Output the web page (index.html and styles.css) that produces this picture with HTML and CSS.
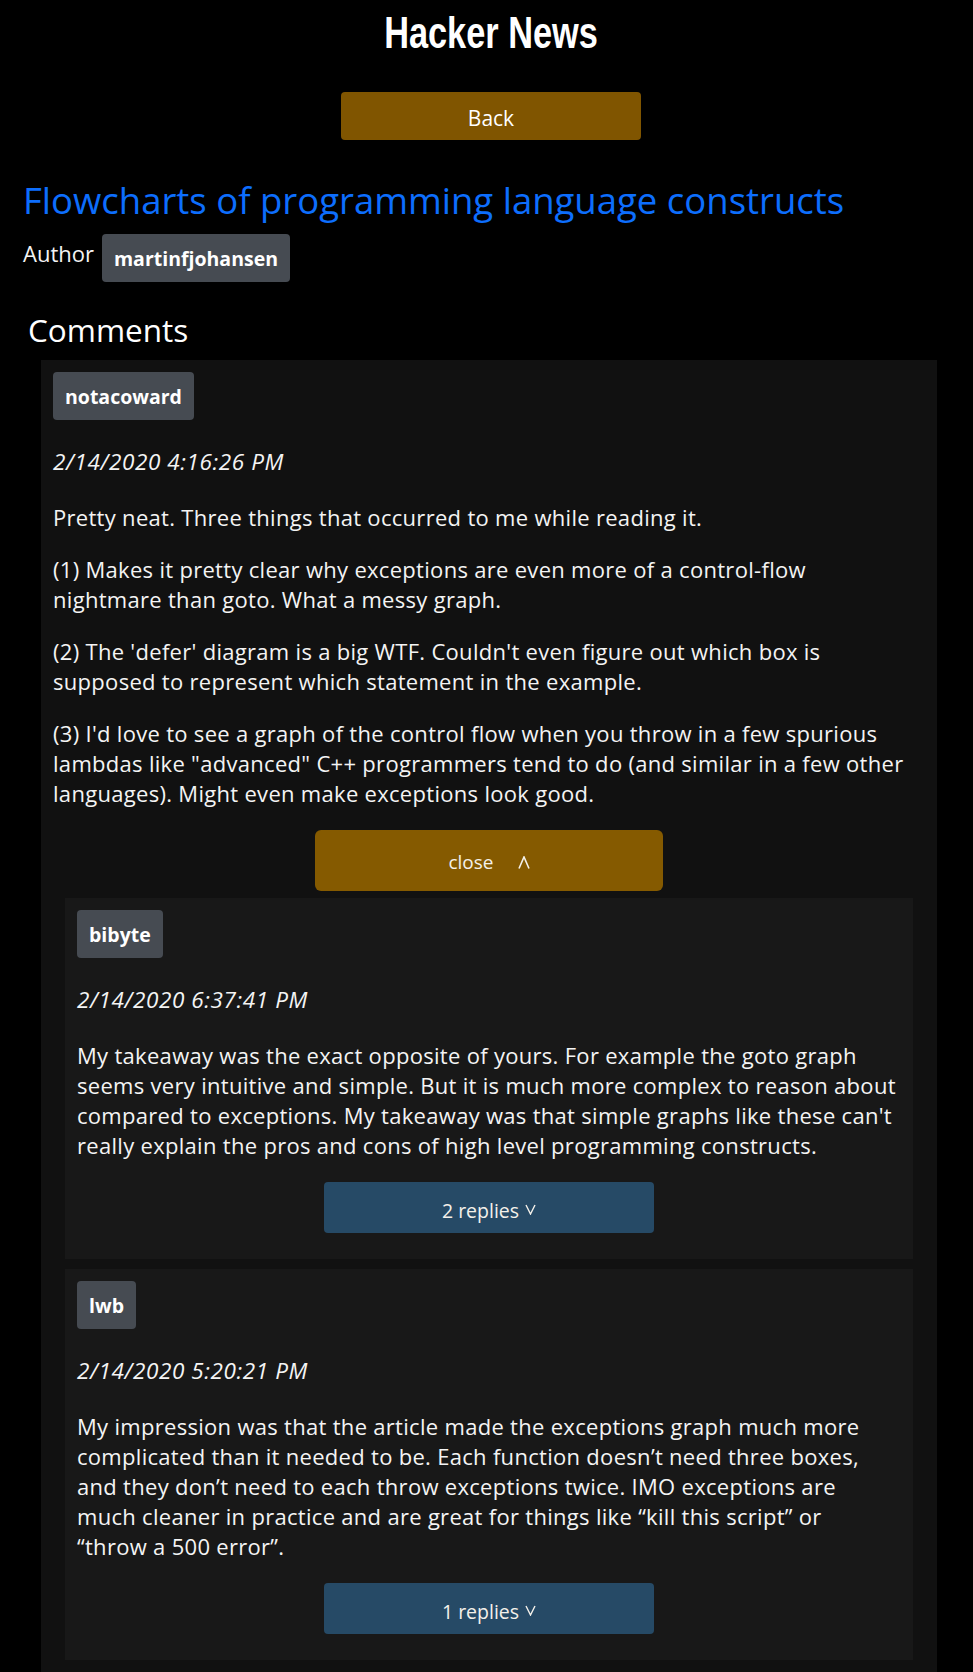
FILE: index.html
```html
<!DOCTYPE html>
<html lang="en">
<head>
<meta charset="utf-8">
<title>Hacker News</title>
<link rel="stylesheet" href="styles.css">
</head>
<body>
<div class="app">
  <header class="masthead">
    <h1 class="logo"><span class="logo-text">Hacker News</span></h1>
  </header>
  <div class="back-row">
    <button class="btn btn-back" type="button">Back</button>
  </div>
  <h2 class="story-title">Flowcharts of programming language constructs</h2>
  <div class="author-row">
    <span class="author-label">Author</span>
    <span class="user-badge">martinfjohansen</span>
  </div>
  <section class="comments">
    <h3 class="comments-heading">Comments</h3>
    <article class="comment comment-root">
      <div class="comment-head"><span class="user-badge">notacoward</span></div>
      <p class="comment-date">2/14/2020 4:16:26 PM</p>
      <div class="comment-body">
        <p>Pretty neat. Three things that occurred to me while reading it.</p>
        <p>(1) Makes it pretty clear why exceptions are even more of a control-flow<br>nightmare than goto. What a messy graph.</p>
        <p>(2) The 'defer' diagram is a big WTF. Couldn't even figure out which box is<br>supposed to represent which statement in the example.</p>
        <p>(3) I'd love to see a graph of the control flow when you throw in a few spurious<br>lambdas like "advanced" C++ programmers tend to do (and similar in a few other<br>languages). Might even make exceptions look good.</p>
      </div>
      <button class="btn toggle toggle-close" type="button"><span>close</span><svg class="caret caret-up" viewBox="0 0 12 13" width="12" height="13"><polyline points="1,12.5 6,1 11,12.5" fill="none" stroke="currentColor" stroke-width="1.6"/></svg></button>
      <div class="replies">
        <article class="comment comment-reply">
          <div class="comment-head"><span class="user-badge">bibyte</span></div>
          <p class="comment-date">2/14/2020 6:37:41 PM</p>
          <div class="comment-body">
            <p>My takeaway was the exact opposite of yours. For example the goto graph<br>seems very intuitive and simple. But it is much more complex to reason about<br>compared to exceptions. My takeaway was that simple graphs like these can't<br>really explain the pros and cons of high level programming constructs.</p>
          </div>
          <button class="btn toggle toggle-replies" type="button"><span>2 replies</span><svg class="caret caret-down" viewBox="0 0 11 11" width="11" height="11"><polyline points="1,1 5.5,10 10,1" fill="none" stroke="currentColor" stroke-width="1.4"/></svg></button>
        </article>
        <article class="comment comment-reply">
          <div class="comment-head"><span class="user-badge">lwb</span></div>
          <p class="comment-date">2/14/2020 5:20:21 PM</p>
          <div class="comment-body">
            <p>My impression was that the article made the exceptions graph much more<br>complicated than it needed to be. Each function doesn’t need three boxes,<br>and they don’t need to each throw exceptions twice. IMO exceptions are<br>much cleaner in practice and are great for things like “kill this script” or<br>“throw a 500 error”.</p>
          </div>
          <button class="btn toggle toggle-replies" type="button"><span>1 replies</span><svg class="caret caret-down" viewBox="0 0 11 11" width="11" height="11"><polyline points="1,1 5.5,10 10,1" fill="none" stroke="currentColor" stroke-width="1.4"/></svg></button>
        </article>
      </div>
    </article>
  </section>
</div>
</body>
</html>
```

FILE: styles.css
```css
html, body {
  margin: 0;
  background: #000;
}

body {
  font-family: "Open Sans", "Noto Sans", sans-serif;
  font-size: 22px;
  line-height: 30px;
  color: #f4f4f4;
}

.app {
  padding: 0 23px;
}

.masthead {
  text-align: center;
  padding: 8px 0 0 8px;
}

.logo {
  margin: 0;
  font-family: "Liberation Sans", Arial, sans-serif;
  font-weight: 700;
  font-size: 44px;
  line-height: 50px;
  color: #fff;
}

.logo-text {
  display: inline-block;
  transform: scaleX(0.78);
}

.back-row {
  display: flex;
  justify-content: center;
  padding-left: 9px;
  margin-top: 34px;
}

.btn {
  border: 0;
  font-family: inherit;
  color: #f4f1ea;
  cursor: pointer;
}

.btn-back {
  width: 300px;
  background: #805500;
  border-radius: 4px;
  font-size: 21px;
  line-height: 30px;
  padding: 11px 0 7px;
  color: #fff;
}

.story-title {
  margin: 39px 0 0;
  font-size: 36.5px;
  line-height: 43px;
  font-weight: 400;
  color: #0d6efd;
}

.author-row {
  display: flex;
  align-items: flex-start;
  gap: 8px;
  margin-top: 12px;
}

.author-label {
  padding-top: 4px;
}

.user-badge {
  display: inline-block;
  background: #464b52;
  color: #fff;
  font-weight: 700;
  font-size: 19.5px;
  line-height: 30px;
  padding: 10px 12px 8px;
  border-radius: 4px;
}

.comments {
  padding: 0 13px 0 5px;
}

.comments-heading {
  margin: 29px 0 11px;
  font-size: 31.5px;
  line-height: 38px;
  font-weight: 400;
  color: #fff;
}

.comment {
  padding: 12px;
}

.comment-head {
  display: flex;
}

.comment-root {
  background: #111;
  margin-left: 13px;
}

.comment-date {
  margin: 27px 0 25px;
  font-style: italic;
  font-size: 22.5px;
  letter-spacing: 0.6px;
}

.comment-body p {
  margin: 0 0 22px;
  letter-spacing: 0.3px;
}

.toggle {
  display: flex;
  justify-content: center;
  align-items: baseline;
  width: 40%;
  margin: 3px auto 0;
  font-size: 19px;
  line-height: 30px;
}

.toggle-close {
  background: #855a00;
  border-radius: 6px;
  padding: 17px 0 14px;
}

.toggle-replies {
  background: #264a66;
  border-radius: 4px;
  padding: 14px 0 7px;
  font-size: 19.5px;
}

.caret {
  display: inline-block;
}

.caret-up {
  margin-left: 24px;
  position: relative;
  top: 0;
}

.caret-down {
  margin-left: 6px;
  position: relative;
  top: -3px;
}

.replies {
  margin-top: 7px;
  padding: 0 12px;
}

.comment-reply {
  background: #181818;
  margin-bottom: 10px;
  padding-bottom: 26px;
}
```
